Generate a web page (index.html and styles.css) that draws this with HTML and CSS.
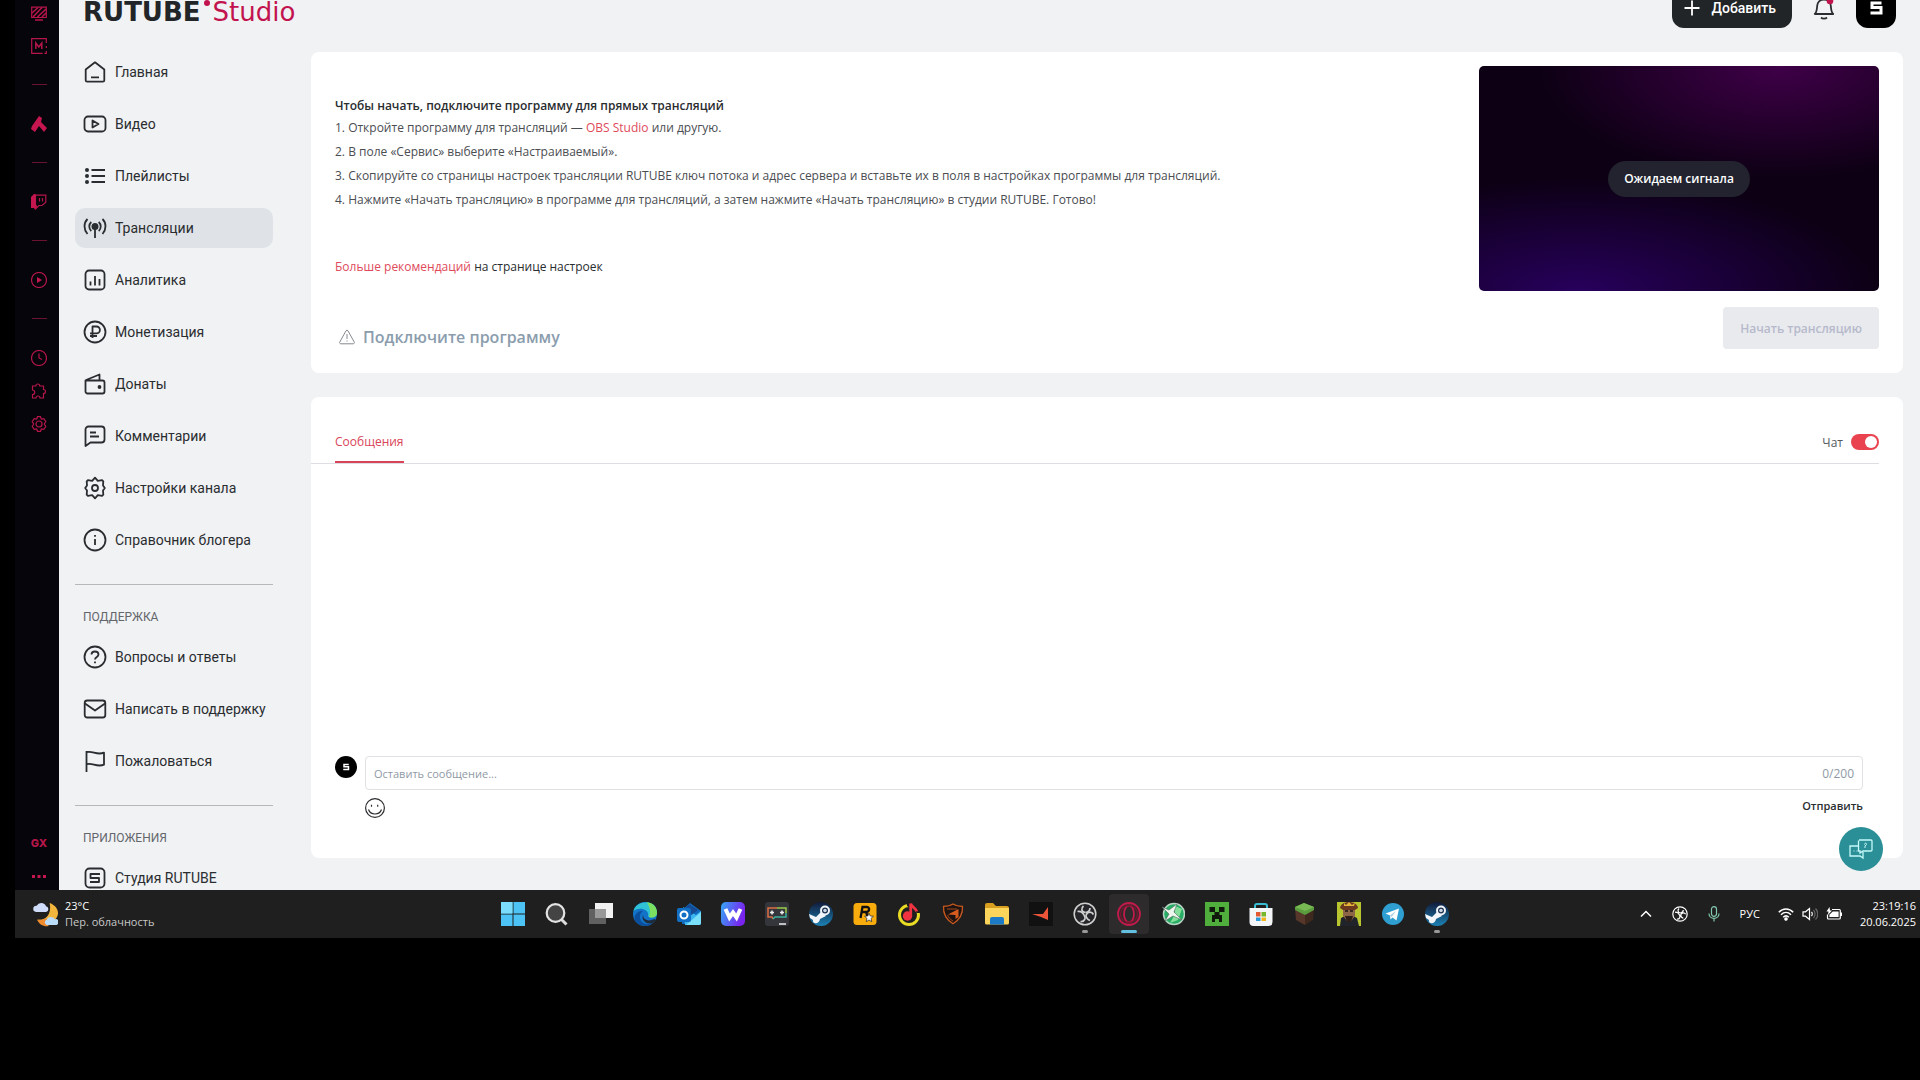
FILE: index.html
```html
<!DOCTYPE html>
<html lang="ru">
<head>
  <meta charset="UTF-8">
  <meta name="viewport" content="width=device-width, initial-scale=1.0">
  <title>RUTUBE Studio</title>
  <link rel="stylesheet" href="styles.css">
</head>
<body>
  <div class="window">
    <aside class="gx-bar">
      <div class="gx-icons">
        <button class="gx-btn" aria-label="Обои"><svg viewBox="0 0 16 16"><path d="M.7 2.200h14.600v10.300H.7z"/><path d="M1 8l6-5.500M2 12l9-9.500M6.500 12L15 4M11 12l4-4M4 15h8" stroke-width="1.600"/></svg></button>
        <button class="gx-btn" aria-label="Музыка"><svg viewBox="0 0 16 16"><path d="M15.300 5V.7H.7v14.600h11M15.300 8v2M13.500 15.300h1.800V13"/><path d="M4.800 11V5l3 4 3-4v6" stroke-width="1.500"/></svg></button>
        <hr class="gx-line">
        <button class="gx-btn" aria-label="Aria"><svg viewBox="0 0 16 16"><path class="fill" d="M8 0l3 2-1 4 6 6-3 4-5-6-4 6-4-3 1-3z"/></svg></button>
        <hr class="gx-line">
        <button class="gx-btn" aria-label="Twitch"><svg viewBox="0 0 16 16"><path d="M4.500 1.200h10.300v7L11 11.500H8L5 14.500v-3H4.500z"/><path class="fill" d="M0 3l3-3h1.500v11L6 12l-2 4-1-2H0z"/><path d="M8.500 4v3.500M11.500 4v3.500"/></svg></button>
        <hr class="gx-line">
        <button class="gx-btn" aria-label="Плеер"><svg viewBox="0 0 16 16"><circle cx="8" cy="8" r="7.500"/><path class="fill" d="M6 5l5 3-5 3z"/></svg></button>
        <hr class="gx-line">
        <button class="gx-btn" aria-label="История"><svg viewBox="0 0 16 16"><circle cx="8" cy="8" r="7.500"/><path d="M8 3.500V8l3 1.500"/></svg></button>
        <button class="gx-btn" aria-label="Расширения"><svg viewBox="0 0 16 16"><path d="M1.500 3h3.300a2 2 0 0 1 4 0h3.700v3.500a2 2 0 0 1 0 4V15H9a2 2 0 0 0-4 0H1.500v-3.500a2.200 2.200 0 0 0 0-4.500z"/></svg></button>
        <button class="gx-btn" aria-label="Настройки"><svg viewBox="0 0 16 16"><path d="M6.500.7h3l.8 2.300 2.500-.4 2 2.900L13.300 8l1.500 2.500-2 2.900-2.500-.4-.8 2.300h-3L5.700 13l-2.500.4-2-2.900L2.700 8 1.200 5.500l2-2.900 2.500.4z"/><circle cx="8" cy="8" r="3"/></svg></button>
      </div>
      <div class="gx-icons gx-bottom">
        <button class="gx-btn gx-text">GX</button>
        <button class="gx-btn" aria-label="Ещё"><svg viewBox="0 0 16 16"><path class="fill" d="M1 7h3v3H1zM6.500 7h3v3h-3zM12 7h3v3h-3z"/></svg></button>
      </div>
    </aside>

    <div class="page">
      <header class="header">
        <a class="logo" href="#"><span class="logo-main">RUTUBE</span><span class="logo-dot"></span><span class="logo-sub">Studio</span></a>
        <div class="header-actions">
          <button class="add-btn"><svg class="icon" viewBox="0 0 24 24"><path d="M12 4.500v15M4.500 12h15"/></svg>Добавить</button>
          <button class="bell" aria-label="Уведомления"><svg class="icon" viewBox="0 0 24 24"><path d="M2.800 18h18.400c-2.200-2-2-5-2.500-9-.4-3-2.900-5.500-6.700-5.500S5.700 6 5.300 9c-.5 4-.3 7-2.500 9zM9 21.500c1.500 1.500 4.500 1.500 6 0"/><circle cx="18" cy="5" r="3.300" fill="#c2134f" stroke="none"/></svg></button>
          <button class="avatar" aria-label="Профиль"><svg viewBox="0 0 16 16"><path d="M13.500 3H4v4.500h9V13H2.500"/></svg></button>
        </div>
      </header>

      <div class="content">
        <nav class="nav">
          <a class="nav-item" href="#"><svg class="icon" viewBox="0 0 24 24"><path d="M2.700 9.500L12 2.300l9.300 7.200v10.700a1.500 1.500 0 0 1-1.500 1.500H4.200a1.500 1.500 0 0 1-1.500-1.500zM8 17.300h8"/></svg>Главная</a>
          <a class="nav-item" href="#"><svg class="icon" viewBox="0 0 24 24"><rect x="1.500" y="4.500" width="21" height="15" rx="3.500"/><path d="M9.500 8.500l6 3.500-6 3.500z"/></svg>Видео</a>
          <a class="nav-item" href="#"><svg class="icon" viewBox="0 0 24 24"><path d="M8.500 6H22M8.500 12H22M8.500 18H22"/><g fill="currentColor" stroke="none"><circle cx="4" cy="6" r="2"/><circle cx="4" cy="12" r="2"/><circle cx="4" cy="18" r="2"/></g></svg>Плейлисты</a>
          <a class="nav-item active" href="#"><svg class="icon" viewBox="0 0 24 24"><circle cx="12" cy="10.500" r="2.600" fill="currentColor"/><path d="M12 11v11M8.300 15c-2.700-2.500-2.700-6.500 0-9M15.700 15c2.700-2.500 2.700-6.500 0-9M4.500 18c-4-4.500-4-11 0-15M19.500 18c4-4.500 4-11 0-15"/></svg>Трансляции</a>
          <a class="nav-item" href="#"><svg class="icon" viewBox="0 0 24 24"><rect x="2.500" y="2.500" width="19" height="19" rx="3.500"/><path d="M7.500 13.500v4M12 8v9.500M16.500 11v6.500"/></svg>Аналитика</a>
          <a class="nav-item" href="#"><svg class="icon" viewBox="0 0 24 24"><circle cx="12" cy="12" r="10.500"/><path d="M9.500 18V6.500h4a3.300 3.300 0 0 1 0 6.800H7M7 16h7"/></svg>Монетизация</a>
          <a class="nav-item" href="#"><svg class="icon" viewBox="0 0 24 24"><path d="M2.500 8.500h17a2 2 0 0 1 2 2v9a2 2 0 0 1-2 2h-15a2 2 0 0 1-2-2zM3 8l13.500-5.500v6"/><circle cx="16.500" cy="15" r="1" fill="currentColor"/></svg>Донаты</a>
          <a class="nav-item" href="#"><svg class="icon" viewBox="0 0 24 24"><path d="M2.500 22V5.500a3 3 0 0 1 3-3h13a3 3 0 0 1 3 3v10a3 3 0 0 1-3 3h-11zM7 8.500h6M7 12.500h9"/></svg>Комментарии</a>
          <a class="nav-item" href="#"><svg class="icon" viewBox="0 0 24 24"><path d="M12 1.700l2.800 3.200 4.300-.8 1.200 1.200-.3 4.200L21.800 12 20 14.500l.3 4.200-1.200 1.200-4.300-.8L12 22.300l-2.800-3.200-4.300.8-1.200-1.200.3-4.200L2.200 12 4 9.500l-.3-4.200 1.200-1.200 4.300.8z"/><circle cx="12" cy="12" r="3"/></svg>Настройки канала</a>
          <a class="nav-item" href="#"><svg class="icon" viewBox="0 0 24 24"><circle cx="12" cy="12" r="10.500"/><path d="M12 11v6M12 7v1.800"/></svg>Справочник блогера</a>
          <hr class="nav-line">
          <h2 class="nav-title">ПОДДЕРЖКА</h2>
          <a class="nav-item" href="#"><svg class="icon" viewBox="0 0 24 24"><circle cx="12" cy="12" r="10.500"/><path d="M8.500 9.500C8.500 5.500 15.500 5.500 15.500 9.500c0 2.500-3.500 2.300-3.500 5M12 16.500v1.800"/></svg>Вопросы и ответы</a>
          <a class="nav-item" href="#"><svg class="icon" viewBox="0 0 24 24"><rect x="1.700" y="3.500" width="20.600" height="17" rx="2.500"/><path d="M2 6.500l10 7 10-7"/></svg>Написать в поддержку</a>
          <a class="nav-item" href="#"><svg class="icon" viewBox="0 0 24 24"><path d="M3.500 23V2M3.500 3.200c6-2 10 3.500 17.500.5v12c-7.500 3-11.500-2.500-17.500-.5"/></svg>Пожаловаться</a>
          <hr class="nav-line">
          <h2 class="nav-title">ПРИЛОЖЕНИЯ</h2>
          <a class="nav-item" href="#"><svg class="icon" viewBox="0 0 24 24"><rect x="2.500" y="2.500" width="19" height="19" rx="4"/><path d="M17 8H7.500v4H16v4H7"/></svg>Студия RUTUBE</a>
        </nav>

        <main class="main">
          <section class="card stream">
            <div class="stream-info">
              <h1 class="stream-title">Чтобы начать, подключите программу для прямых трансляций</h1>
              <p class="step">1. Откройте программу для трансляций — <a href="#">OBS Studio</a> или другую.</p>
              <p class="step">2. В поле «Сервис» выберите «Настраиваемый».</p>
              <p class="step">3. Скопируйте со страницы настроек трансляции RUTUBE ключ потока и адрес сервера и вставьте их в поля в настройках программы для трансляций.</p>
              <p class="step">4. Нажмите «Начать трансляцию» в программе для трансляций, а затем нажмите «Начать трансляцию» в студии RUTUBE. Готово!</p>
              <p class="more"><a href="#">Больше рекомендаций</a> на странице настроек</p>
              <div class="status"><svg viewBox="0 0 16 16"><path d="M7 1.800L.8 13a1.200 1.200 0 0 0 1 1.800h12.400a1.200 1.200 0 0 0 1-1.800L9 1.800a1.200 1.200 0 0 0-2 0zM8 5v5M8 11.500v1"/></svg>Подключите программу</div>
            </div>
            <div class="preview">
              <div class="video"><span class="pill">Ожидаем сигнала</span></div>
              <button class="start-btn" disabled>Начать трансляцию</button>
            </div>
          </section>

          <section class="card chat">
            <div class="tabs">
              <button class="tab">Сообщения</button>
              <label class="toggle">Чат <input type="checkbox" checked></label>
            </div>
            <form class="composer">
              <span class="user"><svg viewBox="0 0 16 16"><path d="M13.500 3H4v4.500h9V13H2.500"/></svg></span>
              <div class="composer-body">
                <div class="field">
                  <input type="text" placeholder="Оставить сообщение..." aria-label="Сообщение" maxlength="200">
                  <span class="counter">0/200</span>
                </div>
                <div class="composer-actions">
                  <button type="button" class="emoji" aria-label="Эмодзи"><svg viewBox="0 0 20 20"><circle cx="10" cy="10" r="9.400"/><path d="M3.500 11.500c2 6 11 6 13 0M6.500 6.800v2M12.700 6.800v2"/></svg></button>
                  <button type="button" class="send">Отправить</button>
                </div>
              </div>
            </form>
          </section>
        </main>
      </div>
      <button class="help" aria-label="Помощь"><svg viewBox="0 0 24 24"><path d="M9.500 9H1v10h10l3 2v-6M10 3h12a1 1 0 0 1 1 1v9a1 1 0 0 1-1 1h-8l-3 2v-2h-1.500V3.500"/><path d="M15.500 7.500c0-2 2.500-1.500 2 0l-1.500 1.500v2M4.500 14h1M7.500 14h1" stroke-width="1"/></svg></button>
    </div>
  </div>

  <footer class="taskbar">
    <button class="weather">
      <svg viewBox="0 0 24 24"><path d="M16 1c8 3 10 10 6 15-4 6-13 7-18 1 9 1 14-6 12-16z" fill="#f2b63d"/><path d="M4 17c4 .5 7-.5 9-2l2 8c-4 1-9-1-11-6z" fill="#ef8b2c"/><path d="M3 9.500a3 3 0 0 1 .5-6 5 5 0 0 1 9 .5 2.800 2.800 0 0 1 0 5.500z" fill="#cfdcfa"/><path d="M13 22a2.700 2.700 0 0 1 0-5 4.500 4.500 0 0 1 8-.5 2.800 2.800 0 0 1 1.500 5.500z" fill="#b9dcf8"/></svg>
      <span class="weather-text"><span>23°C</span><span class="weather-sub">Пер. облачность</span></span>
    </button>
    <div class="apps">
      <button class="app" aria-label="Пуск"><svg viewBox="0 0 24 24"><path d="M0 0h11.500v11.500H0zM12.500 0H24v11.500H12.500zM0 12.500h11.500V24H0zM12.500 12.500H24V24H12.500z" fill="#4cc2f5"/><path d="M0 0h11.500v11.500H0z" fill="#7bdcfb"/></svg></button>
      <button class="app" aria-label="Поиск"><svg viewBox="0 0 24 24"><path d="M16 17l5.500 5.500" stroke="#ddd" stroke-width="3"/><circle cx="10.500" cy="11" r="8.800" fill="#444" stroke="#e4e4e4" stroke-width="2.200"/></svg></button>
      <button class="app" aria-label="Представление задач"><svg viewBox="0 0 24 24"><path d="M6 1h18v15H6z" fill="#f2f2f2"/><path d="M0 7h17v15H0z" fill="#606060"/><path d="M6 7h11v9H6z" fill="#999"/></svg></button>
      <button class="app" aria-label="Edge"><svg viewBox="0 0 24 24"><circle cx="12" cy="12" r="12" fill="#1273c8"/><path d="M.5 9C3-2 24-4 24 11c0 5-7 6-9 3 2-6-8-10-14.500-5z" fill="#2fc3d5"/><path d="M14 .3C21 1 24 6 24 11c0 4-5 5.500-8 4 2-5 1-9-2-14.700z" fill="#7be060"/><path d="M7 14c-1 6 6 10 13 7-5 4-13 4-17-1s1-12 7-11c-2 1-3 3-3 5z" fill="#0b4f9c"/><path d="M10 13c0 5 6 7 11 4l2 1-3 3c-6 2-12-2-10-8z" fill="#1e2b3c"/></svg></button>
      <button class="app" aria-label="Outlook"><svg viewBox="0 0 24 24"><path d="M13 1l11 8v13H5V8z" fill="#1068bc"/><path d="M6 5l13 8 5-4v12a2 2 0 0 1-2 2H8z" fill="#3ab5ef"/><path d="M24 10L9 23h13a2 2 0 0 0 2-2z" fill="#7ae0fa"/><path d="M12 2l9 6-8 6-7-5z" fill="#164a92"/><rect y="6" width="14" height="14" rx="2" fill="#1170c5"/><circle cx="7" cy="13" r="3.500" fill="none" stroke="#fff" stroke-width="2"/></svg></button>
      <button class="app" aria-label="Wallpaper"><svg viewBox="0 0 24 24"><defs><linearGradient id="wg" x2="1" y2="0.300"><stop stop-color="#35a6f5"/><stop offset="1" stop-color="#7a22ee"/></linearGradient></defs><rect width="24" height="24" rx="5" fill="url(#wg)"/><path d="M4.500 7l4 8.500 3.500-5 3.500 5L19.500 7" fill="none" stroke="#fff" stroke-width="4"/></svg></button>
      <button class="app" aria-label="DS4"><svg viewBox="0 0 24 24"><rect width="24" height="24" rx="3" fill="#35363c"/><g fill="none" stroke-width="1.500"><path d="M12 6H3v9h4l1 2" stroke="#dd6e44"/><path d="M12 6h9v5" stroke="#9acb4a"/><path d="M8 17l2-2h11v-4" stroke="#3db1a0"/></g><path d="M7 8.500v4M5 10.500h4M15 10.500h4M17 8.500v4M14 22h7" stroke="#eee" stroke-width="1.500"/></svg></button>
      <button class="app" aria-label="Steam"><svg viewBox="0 0 24 24"><defs><linearGradient id="sg" x2="0" y2="1"><stop stop-color="#101a38"/><stop offset="1" stop-color="#1c82b5"/></linearGradient></defs><circle cx="12" cy="12" r="12" fill="url(#sg)"/><path d="M0 12l7 3 5-5 5 4-6 3c-1 6-8 5-7 1l-3-2z" fill="#f2f6fa"/><circle cx="16" cy="8.500" r="4" fill="#1c2f50" stroke="#f2f6fa" stroke-width="2"/><circle cx="16" cy="8.500" r="1.800" fill="#cbd7e3"/></svg></button>
      <button class="app" aria-label="Rockstar"><svg viewBox="0 0 24 24"><rect x=".5" y="1" width="23" height="22" rx="3.500" fill="#f8ab0c"/><path d="M7.500 16l2-11h4c4 0 3 5-.5 5H9m4 0l1.500 4" fill="none" stroke="#111" stroke-width="2.300"/><path d="M16 11l1.200 3 3.300.2-2.500 2.200.8 3.300-2.800-1.700-2.800 1.700.8-3.300-2.500-2.200 3.300-.2z" fill="#fff" stroke="#222" stroke-width=".7"/></svg></button>
      <button class="app" aria-label="Яндекс Музыка"><svg viewBox="0 0 24 24"><circle cx="12" cy="13" r="9.500" fill="none" stroke="#eadb24" stroke-width="3"/><path d="M10 0h14v11h-4L10 4z" fill="#1f1f1f"/><circle cx="10.500" cy="14" r="4.700" fill="#ef3340"/><path d="M13.700 14V1.500c1 4 5 4 6 8" fill="none" stroke="#ef3340" stroke-width="2.800"/></svg></button>
      <button class="app" aria-label="Щит"><svg viewBox="0 0 24 24"><path d="M12 2c3 2 6 2.300 9.500 2.300.5 8-3 13.500-9.500 17.500C5.500 17.800 2 12.300 2.500 4.300 6 4.300 9 4 12 2z" fill="#1d1412" stroke="#c9581f" stroke-width="1.300"/><path d="M17.500 7v8l-3 2v-4l-7.500-.5z" fill="#d75c20"/><path d="M6 7h10M6.500 13c1 2.500 3 4.500 5.500 6" fill="none" stroke="#a5481c"/></svg></button>
      <button class="app" aria-label="Проводник"><svg viewBox="0 0 24 24"><path d="M0 3a2 2 0 0 1 2-2h6l3 3h11a2 2 0 0 1 2 2v14H0z" fill="#d79e20"/><path d="M0 6h24v15a1.500 1.500 0 0 1-1.500 1.500h-21A1.500 1.500 0 0 1 0 21z" fill="#fbd45c"/><path d="M5 22.500V17a2 2 0 0 1 2-2h10a2 2 0 0 1 2 2v5.500z" fill="#1c7ac7"/></svg></button>
      <button class="app" aria-label="Faceit"><svg viewBox="0 0 24 24"><path d="M0 0h24v24H0z" fill="#111"/><path d="M19 5v13l-7-3-9-3h11z" fill="#ec553a"/></svg></button>
      <button class="app open" aria-label="OBS"><svg viewBox="0 0 24 24"><circle cx="12" cy="12" r="10.800" fill="#26262a" stroke="#cfcfcf" stroke-width="1.500"/><g fill="none" stroke="#cfcfcf" stroke-width="1.700"><path d="M12.500 10.500C8 10 8 6 10.500 4"/><path d="M13 13c2-4 6-3.500 7.500-.5"/><path d="M11 13c2.500 3.500 0 7-3.500 6.500"/><path d="M4.500 9.500c2.500-.5 5 .5 6.500 3.500M17 6c0 2-1.500 4-4.500 4.500M17 18.500c-2.500-1-4-3-4-5.500"/></g></svg></button>
      <button class="app active" aria-label="Opera GX"><svg viewBox="0 0 24 24"><g fill="none" stroke="#c31a4c"><circle cx="12" cy="12" r="11" stroke-width="1.800"/><ellipse cx="12" cy="12" rx="5" ry="8.500" stroke-width="1.800"/><circle cx="12" cy="12" r="8.500" stroke="#74182f" stroke-width="1.500"/></g></svg></button>
      <button class="app" aria-label="Катализатор"><svg viewBox="0 0 24 24"><circle cx="13" cy="12" r="10.500" fill="#27ad64" stroke="#b8d4c5" stroke-width="1.500"/><path d="M14 4l7 3-4 11-8 3 5-9z" fill="#83df99"/><path d="M1 5l7 3 8-6-3 8 8 8-9-4-8 5 4-7z" fill="#edf5ec" stroke="#53665d" stroke-width=".6"/></svg></button>
      <button class="app" aria-label="Minecraft"><svg viewBox="0 0 24 24"><path d="M0 0h24v24H0z" fill="#50ae3c"/><path d="M4.500 5H10v5H4.500zM14 5h5.500v5H14zM9.500 10h5v3H17v7h-3v-3h-4v3H7v-7h2.500z" fill="#101a0c"/></svg></button>
      <button class="app" aria-label="Microsoft Store"><svg viewBox="0 0 24 24"><path d="M6 6V4a2 2 0 0 1 2-2h8a2 2 0 0 1 2 2v2" fill="none" stroke="#38bcd4" stroke-width="2"/><path d="M.5 6h23v14a4 4 0 0 1-4 4h-15a4 4 0 0 1-4-4z" fill="#f3f5f7"/><path d="M7 10h4.500v4.500H7z" fill="#e45a30"/><path d="M12.500 10H17v4.500h-4.500z" fill="#78b72b"/><path d="M7 15.500h4.500V19H7z" fill="#2b98d9"/><path d="M12.500 15.500H17V19h-4.500z" fill="#f3b51e"/></svg></button>
      <button class="app" aria-label="TLauncher"><svg viewBox="0 0 24 24"><path d="M2 6l10 5v12L3 18z" fill="#56372a"/><path d="M21 6l-9 5v12l8-5z" fill="#3f281e"/><path d="M2 5l9-4 10 4v3l-9 5-10-5z" fill="#5b9c3e"/><path d="M11 1l10 4-9 4-10-4z" fill="#77b952"/></svg></button>
      <button class="app" aria-label="Игра"><svg viewBox="0 0 24 24"><path d="M0 0h24v24H0z" fill="#b9c52e"/><path d="M3 24l1-8 4-2h8l4 2 2 8z" fill="#20232a"/><path d="M6 5h12v9l-4 5h-4l-4-5z" fill="#8d6647"/><path d="M3 6c1-8 17-8 18 0l-3 2H6z" fill="#6d3a1f"/><path d="M7 1l2 2 3-3 3 3 3-2-1 3H7z" fill="#e3b43a"/><path d="M8 9h3M13 9h3" stroke="#1d1713" stroke-width="1.500"/><path d="M8 14h8l-2 6h-4z" fill="#2e2019"/></svg></button>
      <button class="app" aria-label="Telegram"><svg viewBox="0 0 24 24"><circle cx="12" cy="12" r="11" fill="#2e9fd0"/><path d="M4.500 11.500l13.500-5-2.500 12-4-3-2 2-.5-4z" fill="#fff"/><path d="M9 13.500l6-4.500-4.500 6" fill="#a9cbe0"/></svg></button>
      <button class="app open" aria-label="Steam"><svg viewBox="0 0 24 24"><circle cx="12" cy="12" r="12" fill="url(#sg)"/><path d="M0 12l7 3 5-5 5 4-6 3c-1 6-8 5-7 1l-3-2z" fill="#f2f6fa"/><circle cx="16" cy="8.500" r="4" fill="#1c2f50" stroke="#f2f6fa" stroke-width="2"/><circle cx="16" cy="8.500" r="1.800" fill="#cbd7e3"/></svg></button>
    </div>
    <div class="tray">
      <button class="tray-btn" aria-label="Скрытые значки"><svg viewBox="0 0 16 16"><path d="M3 10.500l5-5 5 5" stroke-width="1.500"/></svg></button>
      <button class="tray-btn" aria-label="OBS"><svg viewBox="0 0 16 16"><circle cx="8" cy="8" r="7.200"/><path d="M8.300 7C5.500 6.500 5.500 4 7 2.500M8.700 8.700c1.300-2.500 4-2.200 5-.4M7.300 8.700c1.700 2.300 0 4.600-2.300 4.300M3 6.300c1.700-.3 3.300.4 4.300 2.400M11.300 4c0 1.300-1 2.700-3 3M11.300 12.300C9.700 11.700 8.700 10.400 8.700 8.700"/></svg></button>
      <button class="tray-btn mic" aria-label="Микрофон"><svg viewBox="0 0 16 16"><rect x="5.500" y=".7" width="5" height="9.600" rx="2.500"/><path d="M3 7.500c0 6.500 10 6.500 10 0M8 12.500v3"/></svg></button>
      <button class="lang">РУС</button>
      <button class="tray-group" aria-label="Сеть, звук и батарея">
        <svg viewBox="0 0 16 16"><path d="M.8 6.300c4-4.400 10.400-4.400 14.400 0M3 8.800c3-3 7-3 10 0M5.200 11.200c1.700-1.600 3.900-1.600 5.600 0" stroke-width="1.500"/><circle cx="8" cy="13" r="1.200" fill="#fff"/></svg>
        <svg viewBox="0 0 16 16"><path d="M1 5.800h2.500L7.500 2.500v11L3.500 10.200H1z"/><path d="M9.500 6c1 1 1 3 0 4"/><path d="M11.500 4c2 2 2 6 0 8M13.500 2.500c3 3 3 8 0 11" stroke="#666"/></svg>
        <svg viewBox="0 0 16 16"><path d="M6 3.500h7.300a1 1 0 0 1 1 1V12a1 1 0 0 1-1 1H2.500a1 1 0 0 1-1-1V8.500M15.500 6.500v3.500"/><path d="M7 6h5v4.500H4V9z" fill="#fff"/><path d="M3.500 1L.5 5.500h2L2 9l4-4.500H4z" fill="#fff" stroke="none"/></svg>
      </button>
      <button class="clock"><span>23:19:16</span><span>20.06.2025</span></button>
    </div>
  </footer>
</body>
</html>
```
FILE: styles.css
```css
* {
  box-sizing: border-box;
}
body {
  margin: 0;
  height: 100vh;
  padding: 0 0 142px 15px;
  display: flex;
  flex-direction: column;
  overflow: hidden;
  background-color: #000;
  font-family: "Open Sans", "Noto Sans", sans-serif;
  font-size: 12px;
  color: #2a2d30;
}
button {
  border: none;
  background: none;
  padding: 0;
  font: inherit;
  color: inherit;
  cursor: pointer;
}
a {
  text-decoration: none;
}
svg {
  display: block;
  flex-shrink: 0;
}
.window {
  flex: 1;
  min-height: 0;
  display: flex;
}

/* browser sidebar */
.gx-bar {
  width: 44px;
  display: flex;
  flex-direction: column;
  justify-content: space-between;
  padding-left: 4px;
  background-color: #06050b;
}
.gx-icons {
  display: flex;
  flex-direction: column;
  align-items: center;
}
.gx-icons:first-child {
  margin-top: -4px;
}
.gx-btn {
  height: 33px;
  display: flex;
  align-items: center;
}
.gx-btn svg {
  width: 16px;
  height: 16px;
  fill: none;
  stroke: #b5164a;
  stroke-width: 1.2;
}
.gx-btn .fill {
  fill: #c5164f;
  stroke: none;
}
.gx-line {
  width: 15px;
  height: 1px;
  margin: 22px 0;
  border: none;
  background-color: #6b1230;
}
.gx-text {
  font-family: Inter, sans-serif;
  font-size: 11px;
  font-weight: 800;
  color: #b5164a;
}
.gx-bottom {
  margin-bottom: -2px;
}

/* page */
.page {
  position: relative;
  flex: 1;
  min-width: 0;
  display: flex;
  flex-direction: column;
  overflow: hidden;
  background-color: #f1f2f4;
}
.header {
  height: 64px;
  flex-shrink: 0;
  margin-top: -24px;
  padding: 0 24px;
  display: flex;
  align-items: center;
  justify-content: space-between;
}
.logo {
  display: flex;
  align-items: center;
  padding-top: 8px;
  font-family: "DejaVu Sans", sans-serif;
  font-size: 26px;
  line-height: 24px;
}
.logo-main {
  font-weight: bold;
  color: #222528;
}
.logo-dot {
  width: 6px;
  height: 6px;
  margin: 0 3px;
  align-self: flex-start;
  border-radius: 50%;
  background-color: #c2134f;
}
.logo-sub {
  color: #c2134f;
}
.icon {
  width: 24px;
  height: 24px;
  fill: none;
  stroke: currentColor;
  stroke-width: 1.8;
  stroke-linejoin: round;
}
.header-actions {
  display: flex;
  align-items: center;
  gap: 20px;
}
.add-btn {
  height: 40px;
  padding: 0 16px 0 8px;
  display: flex;
  align-items: center;
  gap: 8px;
  border-radius: 12px;
  background-color: #222528;
  color: #fff;
  font-family: Roboto, sans-serif;
  font-size: 14px;
  font-weight: 500;
}
.bell {
  height: 24px;
}
.avatar {
  width: 40px;
  height: 40px;
  display: flex;
  align-items: center;
  justify-content: center;
  border-radius: 12px;
  background-color: #000;
}
.avatar svg {
  width: 16px;
  height: 16px;
  fill: none;
  stroke: #fff;
  stroke-width: 3;
}
.content {
  flex: 1;
  min-height: 0;
  display: flex;
  gap: 38px;
  padding: 12px 17px 0 16px;
}

/* left menu */
.nav {
  width: 198px;
  flex-shrink: 0;
  font-family: Roboto, sans-serif;
}
.nav-item {
  height: 40px;
  margin-bottom: 12px;
  padding-left: 8px;
  display: flex;
  align-items: center;
  gap: 8px;
  border-radius: 10px;
  font-size: 14px;
  color: #2a2d30;
  white-space: nowrap;
}
.nav-item.active {
  background-color: #dfe3e7;
}
.nav-line {
  height: 1px;
  margin: 24px 0;
  border: none;
  background-color: #b6b8bc;
}
.nav-title {
  margin: 0 0 12px;
  padding-left: 8px;
  font-size: 12px;
  line-height: 16px;
  font-weight: normal;
  color: #63666b;
}

/* cards */
.main {
  flex: 1;
  min-width: 0;
  display: flex;
  flex-direction: column;
  gap: 24px;
  padding-bottom: 32px;
}
.card {
  border-radius: 8px;
  background-color: #fff;
}
.stream {
  display: flex;
  justify-content: space-between;
  padding: 14px 24px 24px;
}
.stream a {
  color: #e04a5b;
}
.stream-title {
  margin: 30px 0 0;
  font-size: 12px;
  line-height: 20px;
  font-weight: 600;
}
.step {
  margin: 0;
  line-height: 24px;
  color: #4a4d52;
}
.more {
  margin: 43px 0 0;
  line-height: 24px;
}
.status {
  display: flex;
  align-items: center;
  gap: 8px;
  margin-top: 46px;
  padding-left: 4px;
  font-size: 16px;
  line-height: 24px;
  font-weight: 600;
  color: #8b9dad;
}
.status svg {
  width: 16px;
  height: 16px;
  fill: none;
  stroke: #85898e;
}
.preview {
  width: 400px;
  flex-shrink: 0;
  display: flex;
  flex-direction: column;
  align-items: flex-end;
  gap: 16px;
}
.video {
  width: 100%;
  height: 225px;
  display: flex;
  align-items: center;
  justify-content: center;
  border-radius: 5px;
  background: radial-gradient(ellipse 60% 50% at 75% 0, #3f0048, transparent), radial-gradient(ellipse 75% 50% at 25% 100%, #27005c, transparent), #0d0014;
}
.pill {
  padding: 8px 16px;
  border-radius: 18px;
  background-color: #22232f;
  color: #fff;
  line-height: 20px;
  font-weight: 600;
}
.start-btn {
  height: 42px;
  padding: 0 17px;
  border-radius: 4px;
  background-color: #e9eaee;
  color: #b6b9cb;
  font-weight: 600;
}
.chat {
  flex: 1;
  display: flex;
  flex-direction: column;
  justify-content: space-between;
  padding: 24px 24px 40px 0;
}
.tabs {
  height: 43px;
  display: flex;
  justify-content: space-between;
  padding-left: 24px;
  border-bottom: 1px solid #dcdee1;
}
.tab {
  border-bottom: 2px solid #d9445a;
  color: #d9445a;
}
.toggle {
  display: flex;
  align-items: center;
  gap: 8px;
  color: #55595e;
}
.toggle input {
  appearance: none;
  width: 28px;
  height: 16px;
  margin: 0;
  padding: 2px;
  display: flex;
  justify-content: flex-end;
  border-radius: 8px;
  background-color: #e8434f;
}
.toggle input::before {
  content: "";
  width: 12px;
  height: 12px;
  border-radius: 50%;
  background-color: #fff;
}
.composer {
  display: flex;
  align-items: flex-start;
  gap: 8px;
  padding: 0 16px 0 24px;
}
.user {
  width: 22px;
  height: 22px;
  display: flex;
  align-items: center;
  justify-content: center;
  border-radius: 50%;
  background-color: #000;
}
.user svg {
  width: 8px;
  height: 8px;
  fill: none;
  stroke: #fff;
  stroke-width: 3;
}
.composer-body {
  flex: 1;
}
.field {
  height: 34px;
  display: flex;
  align-items: center;
  padding: 0 8px;
  border: 1px solid #dfe1e5;
  border-radius: 4px;
}
.field input {
  flex: 1;
  border: none;
  padding: 0;
  outline: none;
  font: inherit;
  font-size: 11px;
}
.field input::placeholder {
  color: #8f99a6;
}
.counter {
  color: #8f99a6;
}
.composer-actions {
  display: flex;
  justify-content: space-between;
  margin-top: 8px;
}
.emoji svg {
  width: 20px;
  height: 20px;
  fill: none;
  stroke: #2c2e31;
  stroke-width: 1.2;
}
.send {
  height: 16px;
  line-height: 16px;
  font-size: 11px;
  font-weight: 600;
}
.help {
  position: absolute;
  right: 37px;
  bottom: 19px;
  width: 44px;
  height: 44px;
  display: flex;
  align-items: center;
  justify-content: center;
  border-radius: 50%;
  background-color: #2b8f97;
}
.help svg {
  width: 24px;
  height: 24px;
  fill: none;
  stroke: #c4fafa;
  stroke-width: 1.3;
}

/* taskbar */
.taskbar {
  height: 48px;
  flex-shrink: 0;
  display: grid;
  grid-template-columns: 1fr auto 1fr;
  align-items: center;
  background-color: #1f1f1f;
  color: #fff;
  font-size: 11px;
  line-height: 16px;
}
.weather {
  display: flex;
  align-items: center;
  gap: 7px;
  padding-left: 18px;
  text-align: left;
}
.weather svg {
  width: 25px;
  height: 25px;
}
.weather-text,
.clock {
  display: flex;
  flex-direction: column;
}
.weather-sub {
  color: #c8c8c8;
}
.apps {
  display: flex;
  gap: 4px;
  padding-left: 15px;
}
.app {
  position: relative;
  width: 40px;
  height: 40px;
  display: flex;
  align-items: center;
  justify-content: center;
  border-radius: 4px;
}
.app svg {
  width: 24px;
  height: 24px;
}
.app.active {
  background-color: #2d2b2c;
}
.app.open::after,
.app.active::after {
  content: "";
  position: absolute;
  bottom: 1px;
  width: 6px;
  height: 3px;
  border-radius: 2px;
  background-color: #999;
}
.app.active::after {
  width: 16px;
  background-color: #62bfe0;
}
.tray {
  display: flex;
  align-items: center;
  justify-content: flex-end;
  gap: 18px;
  padding-right: 4px;
}
.tray svg {
  width: 16px;
  height: 16px;
  fill: none;
  stroke: #fff;
  stroke-width: 1.2;
}
.tray .mic svg {
  stroke: #83c9ae;
}
.tray-group {
  display: flex;
  gap: 8px;
}
.clock {
  text-align: right;
}
```
